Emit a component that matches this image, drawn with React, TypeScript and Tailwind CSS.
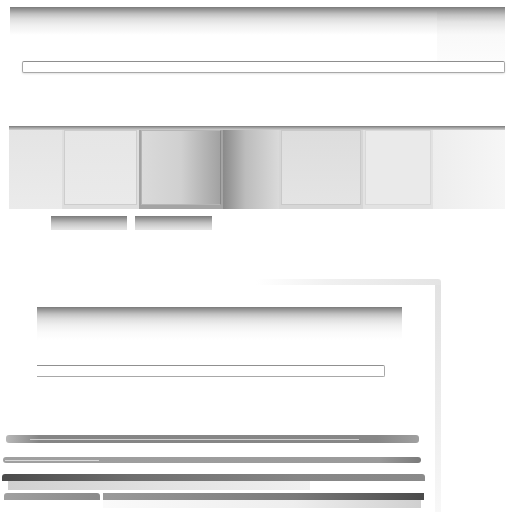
import React from 'react'

// shared top-shadow used by the bars
const topShade = 'bg-[linear-gradient(to_bottom,#7a7a7a_0px,#9a9a9a_3px,#c2c2c2_7px,#dedede_12px,#efefef_18px,#fafafa_25px,#ffffff_100%)]'

function Tile({ w, className, inner }: { w: string; className: string; inner?: string }) {
    return (
        <div className={`${w} h-full flex flex-col ${className}`}>
            <div className="h-[4px] bg-[linear-gradient(to_bottom,#7a7a7a,#a8a8a8_50%,#d0d0d0)]" />
            {inner ? (
                <div className="flex-1 px-[2px] pb-[4px]">
                    <div className={`h-full border ${inner}`} />
                </div>
            ) : (
                <div className="flex-1" />
            )}
        </div>
    )
}

function Bar({ className, children }: { className: string; children?: React.ReactNode }) {
    return <div className={`flex flex-col ${className}`}>{children}</div>
}

export default function App() {
    return (
        <div className="w-[512px] h-[512px] bg-white overflow-hidden flex flex-col font-['Liberation_Sans',sans-serif]">
            {/* top header */}
            <div className="mt-[7px] ml-[10px] mr-[7px] flex h-[28px]">
                <div className={`flex-1 ${topShade}`} />
                <div className="w-[68px] bg-[linear-gradient(to_bottom,#7a7a7a_0px,#9a9a9a_3px,#c4c4c4_8px,#e4e4e4_15px,#f4f4f4_24px,#f9f9f9)]" />
            </div>
            <div className="ml-[10px] mr-[7px] flex h-[26px]">
                <div className="flex-1" />
                <div className="w-[68px] bg-[linear-gradient(to_bottom,#f9f9f9,#fcfcfc)]" />
            </div>
            <div className="ml-[22px] mr-[7px] h-[12px] border border-[#a8a8a8] border-t-[#8e8e8e] rounded-[2px] bg-white shadow-[0_1px_2px_rgba(0,0,0,0.12)]" />

            {/* tile strip */}
            <div className="mt-[53px] ml-[9px] mr-[7px] h-[83px] flex">
                <Tile w="w-[53px]" className="bg-[linear-gradient(to_bottom,#e4e4e4,#ebebeb)]" />
                <Tile w="w-[77px]" className="bg-[#dedede]" inner="border-[#cdcdcd] bg-[linear-gradient(to_bottom,#e6e6e6,#eaeaea)]" />
                <Tile w="w-[84px]" className="bg-[#a4a4a4]" inner="border-[#b5b5b5] border-r-[#888888] bg-[linear-gradient(to_right,#dadada,#d0d0d0_50%,#a2a2a2)]" />
                <Tile w="w-[56px]" className="bg-[linear-gradient(to_right,#8a8a8a,#bcbcbc_40%,#dadada)]" />
                <Tile w="w-[84px]" className="bg-[#d6d6d6]" inner="border-[#c9c9c9] bg-[linear-gradient(to_bottom,#dddddd,#e4e4e4)]" />
                <Tile w="w-[70px]" className="bg-[#e2e2e2]" inner="border-[#d8d8d8] bg-[#eaeaea]" />
                <Tile w="w-[72px]" className="bg-[linear-gradient(to_right,#ededed,#f6f6f6)]" />
            </div>

            {/* tabs */}
            <div className="mt-[7px] ml-[51px] flex gap-[8px] h-[14px]">
                <div className={`w-[76px] ${topShade}`} />
                <div className={`w-[77px] ${topShade}`} />
            </div>

            {/* panel */}
            <div className="mt-[49px] w-[441px] flex flex-col flex-1">
                <div className="h-[6px] bg-[linear-gradient(to_right,transparent_58%,#f0f0f0_75%,#e4e4e4)] rounded-tr-[3px]" />
                <div className="flex flex-1">
                    <div className="flex-1 flex flex-col">
                        <div className={`mt-[22px] ml-[37px] w-[365px] h-[33px] ${topShade}`} />
                        <div className="mt-[25px] ml-[37px] w-[348px] h-[12px] border border-[#a8a8a8] border-t-[#909090] border-l-0 rounded-r-[2px] bg-white" />

                        <Bar className="mt-[58px] ml-[6px] w-[413px] h-[8px] rounded-[3px] bg-[linear-gradient(to_right,#b8b8b8,#858585_8%,#878787_90%,#a0a0a0)] justify-center">
                            <div className="ml-[24px] mr-[60px] h-px bg-[#d0d0d0]" />
                        </Bar>
                        <Bar className="mt-[14px] ml-[3px] w-[418px] h-[6px] rounded-[3px] bg-[linear-gradient(to_right,#a0a0a0,#9a9a9a_90%,#7a7a7a)] justify-center">
                            <div className="ml-[2px] w-[94px] h-px bg-[#d8d8d8]" />
                        </Bar>
                        <Bar className="mt-[11px] ml-[2px] w-[423px] h-[16px]">
                            <div className="h-[7px] rounded-t-[3px] bg-[linear-gradient(to_right,#4a4a4a,#6e6e6e_30%,#868686_70%,#8a8a8a)]" />
                            <div className="flex flex-1">
                                <div className="ml-[6px] w-[302px] bg-[linear-gradient(to_right,#d0d0d0,#e2e2e2_50%,#f0f0f0)]" />
                            </div>
                        </Bar>
                        <Bar className="mt-[3px] ml-[4px] w-[420px] h-[15px]">
                            <div className="flex h-[7px] gap-[3px]">
                                <div className="w-[96px] rounded-t-[3px] bg-[linear-gradient(to_right,#a0a0a0,#8a8a8a)]" />
                                <div className="flex-1 bg-[linear-gradient(to_right,#9a9a9a,#7a7a7a_60%,#4a4a4a)]" />
                            </div>
                            <div className="flex flex-1">
                                <div className="ml-[99px] flex-1 mr-[3px] bg-[linear-gradient(to_right,#fafafa,#eeeeee_60%,#d0d0d0)]" />
                            </div>
                        </Bar>
                    </div>
                    <div className="w-[6px] bg-[linear-gradient(to_bottom,#e2e2e2,#eeeeee_60%,#f8f8f8)]" />
                </div>
            </div>
        </div>
    )
}
